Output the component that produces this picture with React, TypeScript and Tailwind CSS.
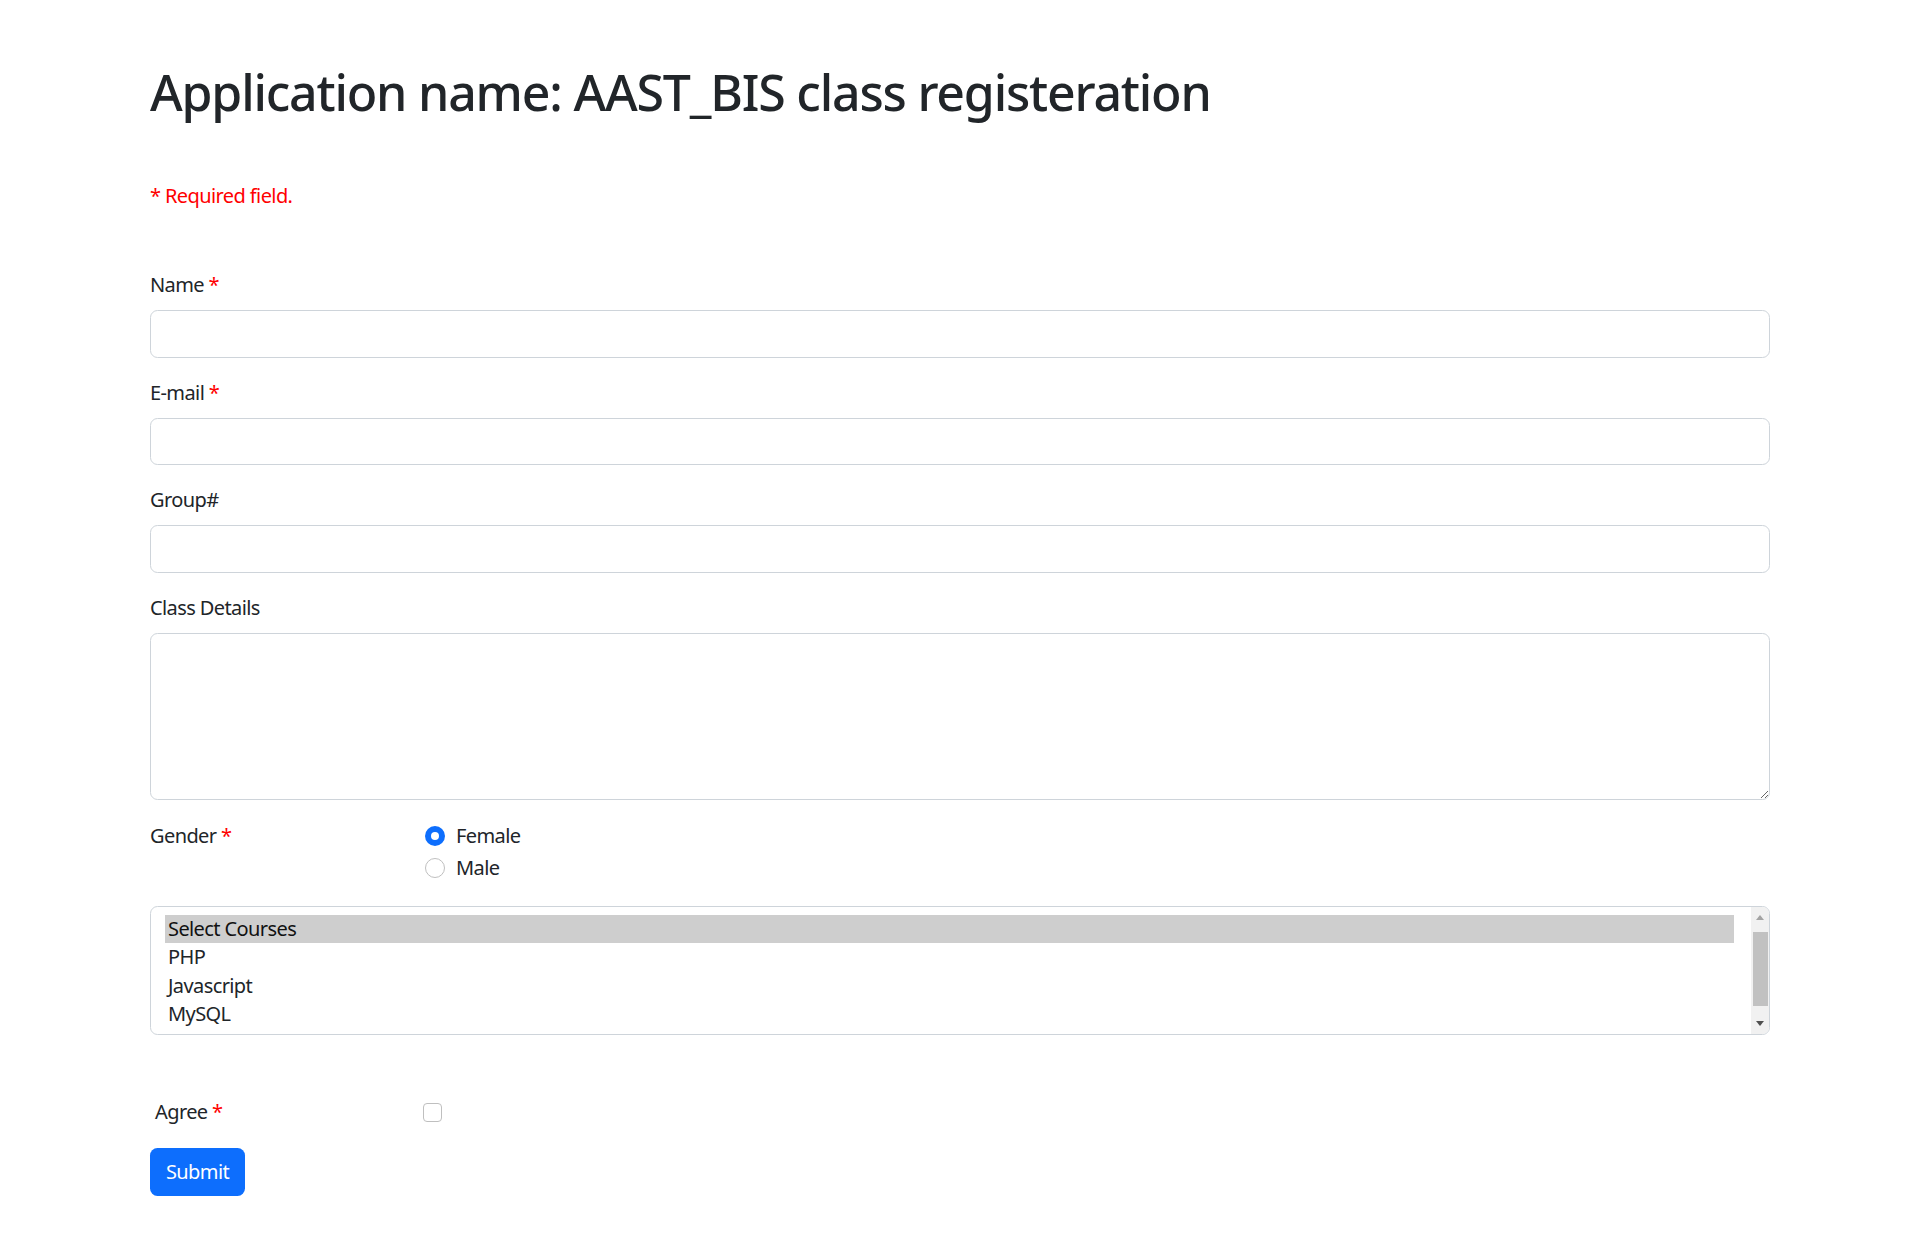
import React from "react";

const font = { fontFamily: '"Noto Sans", "Open Sans", sans-serif' };

function Req() {
    return <span className="text-[#ff0000]"> *</span>;
}

function Field({ label, required }: { label: string; required?: boolean }) {
    return (
        <div className="mb-[20px]">
            <label className="block mb-[10px] leading-[30px]">
                {label}
                {required && <Req />}
            </label>
            <input
                type="text"
                className="block w-full h-[47.5px] border border-[#ced4da] rounded-[7.5px] px-[15px] outline-none bg-white"
            />
        </div>
    );
}

export default function App() {
    const courses = ["Select Courses", "PHP", "Javascript", "MySQL"];

    return (
        <div className="min-h-[1256px] bg-white text-[#212529] text-[20px] tracking-[-0.03em]" style={font}>
            <div className="w-[1650px] mx-auto px-[15px] pt-[62px]">
                <h1 className="text-[50px] leading-[60px] font-medium tracking-[-0.024em]">
                    Application name: AAST_BIS class registeration
                </h1>

                <p className="mt-[59px] leading-[30px] text-[#ff0000]">* Required field.</p>

                <form className="mt-[59px]">
                    <Field label="Name" required />
                    <Field label="E-mail" required />
                    <Field label="Group#" />

                    <div className="mb-[21px]">
                        <label className="block mb-[10px] leading-[30px]">Class Details</label>
                        <textarea className="block w-full h-[167px] border border-[#ced4da] rounded-[7.5px] px-[15px] py-[7px] outline-none resize-y" />
                    </div>

                    {/* gender row */}
                    <div className="flex">
                        <div className="w-[275px] leading-[30px]">
                            Gender<Req />
                        </div>
                        <div className="flex flex-col gap-[2.5px]">
                            <div className="flex items-center h-[30px] gap-[11px]">
                                <span className="w-[20px] h-[20px] rounded-full bg-[#0d6efd] flex items-center justify-center">
                                    <span className="w-[8px] h-[8px] rounded-full bg-white" />
                                </span>
                                <span>Female</span>
                            </div>
                            <div className="flex items-center h-[30px] gap-[11px]">
                                <span className="w-[20px] h-[20px] rounded-full border border-[#bfbfbf] bg-white" />
                                <span>Male</span>
                            </div>
                        </div>
                    </div>

                    {/* courses listbox */}
                    <div className="flex h-[129px] border border-[#ced4da] rounded-[7.5px] mt-[23px] overflow-hidden">
                        <div className="flex-1 pl-[14px] pr-[17px] pt-[8px]">
                            {courses.map((c, i) => (
                                <div
                                    key={c}
                                    className={
                                        i === 0
                                            ? "h-[28px] leading-[28px] pl-[3px] bg-[#cecece] text-[#111]"
                                            : "h-[28.5px] leading-[28.5px] pl-[3px]"
                                    }
                                >
                                    {c}
                                </div>
                            ))}
                        </div>
                        <div className="w-[18px] bg-[#f1f1f1] flex flex-col items-center">
                            <svg width="10" height="14" viewBox="0 0 10 14" className="mt-[3px]">
                                <path d="M1 10 L5 5 L9 10 Z" fill="#a3a3a3" />
                            </svg>
                            <div className="w-[15px] h-[74px] bg-[#c1c1c1] mt-[8px]" />
                            <div className="flex-1" />
                            <svg width="10" height="14" viewBox="0 0 10 14" className="mb-[3px]">
                                <path d="M1 4 L5 9 L9 4 Z" fill="#505050" />
                            </svg>
                        </div>
                    </div>

                    {/* agree row */}
                    <div className="flex items-center mt-[62px] h-[30px]">
                        <div className="w-[273px] pl-[5px]">
                            Agree<Req />
                        </div>
                        <span className="w-[19px] h-[19px] rounded-[4px] border border-[#bfbfbf] bg-white" />
                    </div>

                    <button
                        type="button"
                        className="mt-[21px] h-[48px] w-[95px] rounded-[7.5px] bg-[#0d6efd] text-white"
                    >
                        Submit
                    </button>
                </form>
            </div>
        </div>
    );
}
